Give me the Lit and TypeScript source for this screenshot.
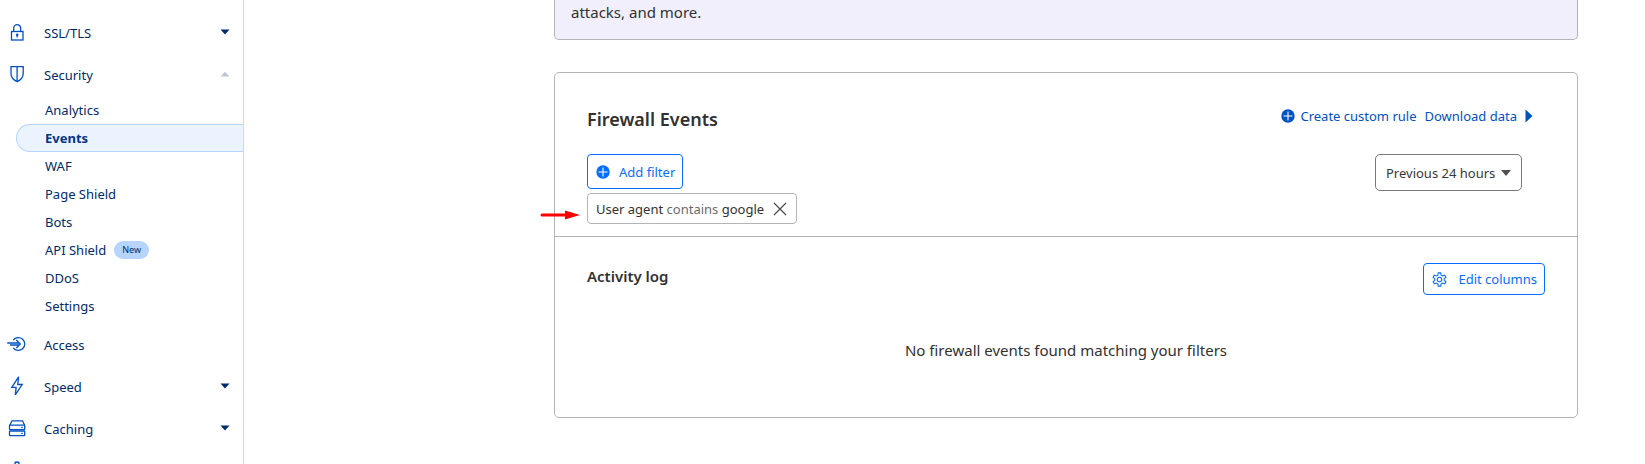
import { LitElement, html, svg, css, nothing } from "lit";
import { customElement, property, state } from "lit/decorators.js";
import { classMap } from "lit/directives/class-map.js";

interface SubItem { label: string; badge?: string }
interface NavItem { label: string; icon: string; expandable?: boolean; children?: SubItem[] }

const NAV: NavItem[] = [
  { label: "SSL/TLS", icon: "lock", expandable: true },
  {
    label: "Security", icon: "shield", expandable: true,
    children: [
      { label: "Analytics" }, { label: "Events" }, { label: "WAF" }, { label: "Page Shield" },
      { label: "Bots" }, { label: "API Shield", badge: "New" }, { label: "DDoS" }, { label: "Settings" },
    ],
  },
  { label: "Access", icon: "access" },
  { label: "Speed", icon: "bolt", expandable: true },
  { label: "Caching", icon: "drive", expandable: true },
];

const ICONS: Record<string, unknown> = {
  lock: svg`<rect x="4.500" y="8.500" width="11.500" height="8.500"/><path d="M6.700 8.500V5.200a3.500 3.500 0 0 1 7 0v3.300"/><circle cx="10.200" cy="11.800" r=".6" fill="currentColor"/><path d="M10.200 12v2.600"/>`,
  shield: svg`<path d="M4 1.700h12.200v6.800c0 3.500-2.300 6.400-6.100 8.200c-3.800-1.800-6.100-4.700-6.100-8.200zM10.100 1.700v15"/>`,
  access: svg`<path d="M6.200 5.200A6.400 6.400 0 1 1 6.200 12.800M.3 8h12.200M3 10h9.500M9.300 5l4 4l-4 4"/>`,
  bolt: svg`<path d="M11.600-.2L4.800 10.300h4.300L8.300 17.800L15.200 7.500h-4.400z"/>`,
  drive: svg`<path d="M2.700 6.300l2.300-4.500h10.500L17.600 6.300"/><rect x="2.500" y="6.200" width="15.200" height="4.400" rx=".6"/><rect x="2.500" y="12" width="15.200" height="4.600" rx=".6"/><path d="M14.300 8.500h1.400M14.300 14.300h1.400"/>`,
  gear: svg`<g transform="translate(-1.550 -1.550) scale(1.100)"><circle cx="10.500" cy="10.500" r="2.700"/><path d="M9 2.500h3l.5 2.700l1.700 1l2.600-1l1.500 2.600l-2.100 1.700v2l2.100 1.700l-1.500 2.600l-2.600-1l-1.700 1l-.5 2.700h-3l-.5-2.700l-1.700-1l-2.600 1l-1.500-2.600l2.100-1.700v-2l-2.100-1.700l1.500-2.600l2.600 1l1.700-1z"/></g>`,
};

@customElement("line-icon")
class LineIcon extends LitElement {
  @property() name = "";
  @property({ type: Number }) size = 20;
  static styles = css`
    :host { display: block; flex: none; }
    svg { display: block; overflow: visible; fill: none; stroke: currentColor; stroke-width: 1.3; }
  `;
  render() {
    return html`<svg width=${this.size} height=${this.size} viewBox="0 0 20 20" aria-hidden="true">${ICONS[this.name]}</svg>`;
  }
}

@customElement("plus-icon")
class PlusIcon extends LitElement {
  static styles = css`
    :host { display: block; flex: none; }
    svg { display: block; }
  `;
  render() {
    return html`<svg width="14" height="14" viewBox="0 0 14 14" aria-hidden="true">
      <circle cx="7" cy="7" r="6.700" fill="currentColor"/>
      <path d="M7 2.500v9M2.500 7h9" stroke="#fff" stroke-width="1.100"/>
    </svg>`;
  }
}

@customElement("side-nav")
class SideNav extends LitElement {
  @state() private current = "Events";

  static styles = css`
    :host { display: block; border-right: 1px solid #d5d7d8; padding-top: 12px; color: #002b69; font-size: 13px; }
    ul { list-style: none; margin: 0; padding: 0; }
    .row {
      display: flex; align-items: center; box-sizing: border-box; width: 100%; height: 42px;
      padding: 0 13px 0 7px; gap: 17px; border: 0; background: none;
      color: inherit; font: inherit; text-align: left; text-decoration: none;
    }
    .icon { color: #0051c3; }
    .label { flex: 1; }
    .caret { flex: none; }
    .caret.open { color: #b9c6d8; }
    .sub { padding: 0 0 4px 16px; }
    .link {
      display: flex; align-items: center; box-sizing: border-box; height: 28px; gap: 8px;
      padding-left: 28px; border: 1px solid transparent; border-right: 0;
      border-radius: 14px 0 0 14px; color: inherit; text-decoration: none;
    }
    .link.current { background: #ebf3ff; border-color: #b6d5ff; color: #003682; font-weight: 700; }
    .badge { padding: 0 8px; border-radius: 9px; background: #b6d4ff; font-size: 9px; line-height: 18px; }
  `;

  private caret(open: boolean) {
    return html`<svg class=${classMap({ caret: true, open })} width="10" height="8" viewBox="0 0 10 8" aria-hidden="true">
      <path fill="currentColor" d=${open ? "M.8 5.500L5 .8L9.200 5.500z" : "M.5 .5h9L5 5.500z"} />
    </svg>`;
  }

  private renderItem(item: NavItem) {
    const open = !!item.children;
    const content = html`<line-icon class="icon" name=${item.icon}></line-icon><span class="label">${item.label}</span>`;
    return html`<li>
      ${item.expandable
        ? html`<button class="row" aria-expanded=${open}>${content}${this.caret(open)}</button>`
        : html`<a class="row" href="#">${content}</a>`}
      ${item.children
        ? html`<ul class="sub">${item.children.map((c) => html`<li>
            <a href="#" class=${classMap({ link: true, current: c.label === this.current })}
              @click=${() => (this.current = c.label)}>${c.label}${c.badge ? html`<span class="badge">${c.badge}</span>` : nothing}</a>
          </li>`)}</ul>`
        : nothing}
    </li>`;
  }

  render() {
    return html`<nav aria-label="Zone"><ul>
      ${NAV.map((i) => this.renderItem(i))}
      <li><a class="row" href="#" aria-label="More"><line-icon class="icon" name="gear"></line-icon></a></li>
    </ul></nav>`;
  }
}

@customElement("firewall-events")
class FirewallEvents extends LitElement {
  @state() private filtered = true;

  static styles = css`
    :host { display: block; border: 1px solid #b3b4b5; border-radius: 5px; background: #fff; }
    h2, h3, p { margin: 0; }
    h2 { font-size: 18px; line-height: 28px; font-weight: 600; }
    h3 { font-size: 15px; line-height: 26px; font-weight: 600; }
    .top { padding: 32px 32px 12px; border-bottom: 1px solid #b3b4b5; }
    .bar { display: flex; justify-content: space-between; align-items: flex-start; }
    .links { display: flex; gap: 8px; padding-right: 12px; font-size: 13px; line-height: 22px; }
    .links a { display: flex; align-items: center; gap: 5px; color: #0051c3; text-decoration: none; }
    .links .next { gap: 8px; }
    .filters { padding-top: 21px; }
    .outline {
      display: flex; align-items: center; box-sizing: border-box; height: 35px; padding: 0 7px 0 8px; gap: 9px;
      border: 1px solid #056eff; border-radius: 4px; background: #fff; color: #056eff;
      font: inherit; font-size: 13px;
    }
    .outline.small { height: 32px; gap: 11px; }
    .chips { position: relative; padding-top: 4px; }
    .chip {
      display: inline-flex; align-items: center; box-sizing: border-box; height: 31px; padding: 0 9px 0 8px; gap: 9px;
      border: 1px solid #b3b4b5; border-radius: 4px; font-size: 13px; vertical-align: top;
    }
    .op { color: #6b6b6b; }
    .close { display: flex; padding: 0; border: 0; background: none; color: #4a4a4a; }
    .pointer { position: absolute; left: -47px; top: 21px; }
    .period { display: grid; align-items: center; margin-right: 23px; }
    .period > * { grid-area: 1 / 1; }
    .period select {
      appearance: none; height: 37px; padding: 0 25px 0 10px; border: 1px solid #797979; border-radius: 5px;
      background: #fff; color: #36393a; font: inherit; font-size: 13px;
    }
    .period svg { justify-self: end; margin-right: 11px; pointer-events: none; }
    .log { padding: 26px 32px 53px; }
    .empty { padding-top: 41px; text-align: center; font-size: 15px; line-height: 28px; }
  `;

  render() {
    return html`
      <section class="top">
        <div class="bar">
          <h2>Firewall Events</h2>
          <div class="links">
            <a href="#"><plus-icon></plus-icon>Create custom rule</a>
            <a class="next" href="#">Download data<svg width="8" height="14" viewBox="0 0 8 14" aria-hidden="true"><path fill="currentColor" d="M.5 .5L7.500 7L.5 13.500z"/></svg></a>
          </div>
        </div>
        <div class="bar filters">
          <div>
            <button class="outline"><plus-icon></plus-icon>Add filter</button>
            <div class="chips">
              ${this.filtered
                ? html`<div class="chip"><span>User agent <span class="op">contains</span> google</span>
                    <button class="close" aria-label="Remove filter" @click=${() => (this.filtered = false)}>
                      <svg width="14" height="14" viewBox="0 0 14 14" aria-hidden="true"><path d="M1 1l12 12M13 1L1 13" stroke="currentColor" stroke-width="1.200"/></svg>
                    </button></div>`
                : nothing}
              <svg class="pointer" width="40" height="10" viewBox="0 0 40 10" aria-hidden="true">
                <path d="M2 5h26" stroke="#f00" stroke-width="3" stroke-linecap="round"/><path d="M25 .5L40 5L25 9.500z" fill="#f00"/>
              </svg>
            </div>
          </div>
          <div class="period">
            <select aria-label="Time period"><option>Previous 24 hours</option></select>
            <svg width="10" height="6" viewBox="0 0 10 6" aria-hidden="true"><path fill="#4e5255" d="M0 0h10L5 6z"/></svg>
          </div>
        </div>
      </section>
      <section class="log">
        <div class="bar">
          <h3>Activity log</h3>
          <button class="outline small"><line-icon name="gear" size="15"></line-icon>Edit columns</button>
        </div>
        <p class="empty">No firewall events found matching your filters</p>
      </section>`;
  }
}

@customElement("app-root")
class AppRoot extends LitElement {
  static styles = css`
    :host {
      display: grid; grid-template-columns: 244px minmax(0, 1fr); height: 100vh; overflow: hidden;
      background: #fff; color: #313131; font-family: "Noto Sans", "Open Sans", sans-serif; font-size: 15px;
    }
    main { display: flex; flex-direction: column; gap: 32px; padding: 0 67px 46px 310px; }
    .notice {
      padding: 0 16px 14px; border: 1px solid #b3b4b5; border-top: 0; border-radius: 0 0 5px 5px;
      background: #f2effd; line-height: 25px;
    }
  `;
  render() {
    return html`
      <side-nav></side-nav>
      <main>
        <div class="notice">attacks, and more.</div>
        <firewall-events></firewall-events>
      </main>`;
  }
}
